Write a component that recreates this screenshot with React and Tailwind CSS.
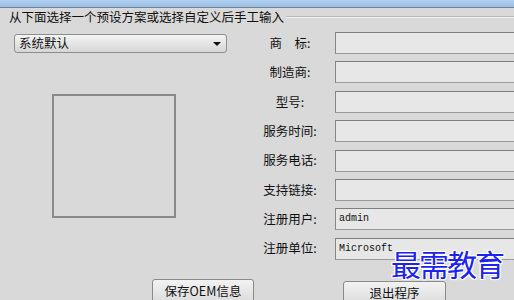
export default function App() {
  const rows = [
    { label: "商\u3000标:", value: "" },
    { label: "制造商:", value: "" },
    { label: "型号:", value: "" },
    { label: "服务时间:", value: "" },
    { label: "服务电话:", value: "" },
    { label: "支持链接:", value: "" },
    { label: "注册用户:", value: "admin" },
    { label: "注册单位:", value: "Microsoft" },
  ];

  return (
    <div className="relative w-[514px] h-[300px] overflow-hidden bg-[#d9d9d9] text-[#111] font-['Noto_Sans_CJK_SC','Noto_Sans',sans-serif]">
      {/* title strip */}
      <div className="h-[8px] bg-gradient-to-b from-[#b2d0ee] to-[#97bde2] border-b border-[#6f8197]" />

      {/* group caption */}
      <div className="flex items-center h-[18px] pl-[9px]">
        <span className="text-[12.5px] leading-none whitespace-nowrap">
          从下面选择一个预设方案或选择自定义后手工输入
        </span>
        <div className="flex-1 ml-[2px] h-[2px] border-t border-[#b9b9b9] border-b border-b-[#f2f2f2]" />
      </div>

      <div className="flex">
        {/* left column */}
        <div className="w-[258px] shrink-0 pl-[14px] pt-[8px]">
          <div className="relative flex items-center w-[213px] h-[19px] rounded-[3px] border border-[#8d8d8d] bg-gradient-to-b from-[#f4f4f4] to-[#d6d6d6] pl-[4px]">
            <span className="text-[12.5px] leading-none">系统默认</span>
            <div className="ml-auto mr-[5px] w-0 h-0 border-l-[4px] border-r-[4px] border-t-[4px] border-l-transparent border-r-transparent border-t-[#111]" />
          </div>
          <div className="ml-[38px] mt-[41px] w-[124px] h-[124px] border-2 border-[#8a8a8a]" />
        </div>

        {/* right column */}
        <div className="shrink-0 pt-[6px] flex flex-col gap-[7.4px]">
          {rows.map((r) => (
            <div key={r.label} className="flex items-center h-[22px]">
              <div className="w-[64px] shrink-0 text-center text-[12.5px] leading-none whitespace-nowrap">
                {r.label}
              </div>
              <div className="ml-[13px] shrink-0 w-[190px] h-[22px] bg-[#e7e7e7] border border-[#9b9b9b] border-t-[#7e7e7e] border-l-[#858585] flex items-start pt-[3px] pl-[3px]">
                <span className="text-[10px] leading-[13px] font-['Liberation_Mono',monospace]">
                  {r.value}
                </span>
              </div>
            </div>
          ))}
        </div>
      </div>

      {/* buttons */}
      <div className="flex items-start pl-[152px] mt-[19px]">
        <button className="w-[102px] shrink-0 h-[24px] rounded-[3px] border border-[#8a8a8a] bg-gradient-to-b from-[#f2f2f2] to-[#dcdcdc] text-[12.5px] leading-none pt-[1px]">
          保存OEM信息
        </button>
        <button className="ml-[89px] shrink-0 mt-[2px] w-[103px] h-[24px] rounded-[3px] border border-[#8a8a8a] bg-gradient-to-b from-[#f2f2f2] to-[#dcdcdc] text-[12.5px] leading-none pt-[1px]">
          退出程序
        </button>
      </div>

      {/* watermark */}
      <div className="absolute left-[391px] top-[248px] text-[30px] leading-none tracking-[-2px] text-[#1c22f0] font-['Noto_Sans_CJK_SC',serif] [text-shadow:1px_1px_0_#fff,-1px_-1px_0_#fff,1px_-1px_0_#fff,-1px_1px_0_#fff,0_0_3px_#fff]">
        最需教育
      </div>
    </div>
  );
}
